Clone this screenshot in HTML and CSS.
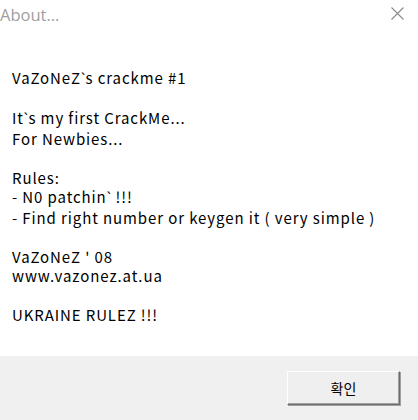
FILE: index.html
```html
<!DOCTYPE html>
<html>
<head>
<meta charset="utf-8">
<link rel="stylesheet" href="styles.css">
</head>
<body>
<div class="dialog">
  <div class="titlebar">
    <span class="title">About...</span>
    <svg class="close" width="13" height="13" viewBox="0 0 13 13"><path d="M0.5 0.5 L12.5 12.5 M12.5 0.5 L0.5 12.5" stroke="#8a8a8a" stroke-width="1.1" fill="none"/></svg>
  </div>
  <div class="content">
    <p class="line">VaZoNeZ<span class="tick">`</span>s crackme #1</p>
    <p class="line blank">&nbsp;</p>
    <p class="line">It<span class="tick">`</span>s my first CrackMe...</p>
    <p class="line">For Newbies...</p>
    <p class="line blank">&nbsp;</p>
    <p class="line">Rules:</p>
    <p class="line">- N0 patchin<span class="tick">`</span> !!!</p>
    <p class="line">- Find right number or keygen it ( very simple )</p>
    <p class="line blank">&nbsp;</p>
    <p class="line">VaZoNeZ ' 08</p>
    <p class="line">www.vazonez.at.ua</p>
    <p class="line blank">&nbsp;</p>
    <p class="line">UKRAINE RULEZ !!!</p>
  </div>
  <div class="footer">
    <button class="ok">확인</button>
  </div>
</div>
</body>
</html>
```
FILE: styles.css
```css
html, body {
  margin: 0;
  padding: 0;
  background: #ffffff;
}
.dialog {
  width: 418px;
  height: 420px;
  display: flex;
  flex-direction: column;
  font-family: "Open Sans", "Noto Sans CJK KR", sans-serif;
}
.titlebar {
  height: 30px;
  display: flex;
  align-items: center;
  justify-content: space-between;
  padding: 0 14px 0 0;
}
.title {
  font-size: 16.5px;
  color: #a0a0a0;
  margin-top: -1px;
}
.close {
  margin-top: -4px;
}
.content {
  flex: 1;
  padding: 38px 0 0 12px;
}
.line {
  margin: 0;
  font-family: "Noto Sans CJK KR", sans-serif;
  font-size: 15px;
  letter-spacing: 0.9px;
  line-height: 19.5px;
  color: #000;
  white-space: pre;
}
.tick {
  font-family: "Open Sans", sans-serif;
  letter-spacing: 0.4px;
}
.footer {
  height: 64px;
  background: #f0f0f0;
  display: flex;
  justify-content: flex-end;
  align-items: flex-start;
  padding: 15px 18px 0 0;
  box-sizing: border-box;
}
.ok {
  width: 113px;
  height: 34px;
  margin: 0;
  padding: 0;
  background: #efefef;
  border: 1px solid;
  border-color: #ffffff #6d6d6d #6d6d6d #ffffff;
  box-shadow: 1px 1px 0 #a0a0a0, inset -1px -1px 0 #a0a0a0;
  font-family: "Noto Sans CJK KR", sans-serif;
  font-size: 14px;
  color: #000;
}
```
